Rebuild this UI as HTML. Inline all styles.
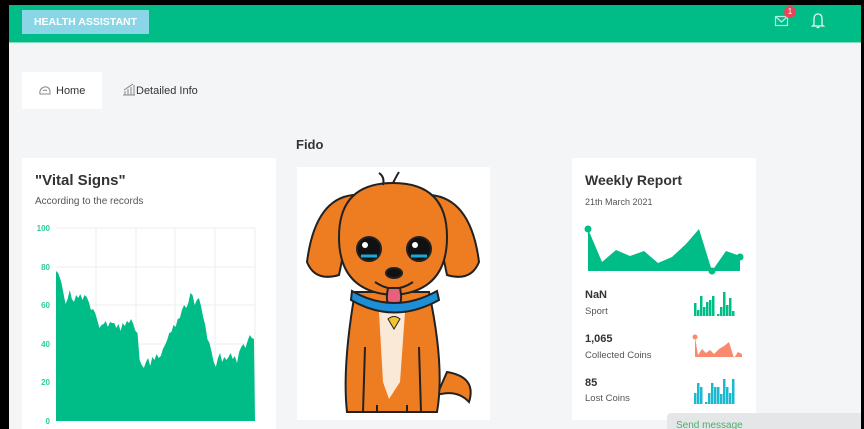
<!DOCTYPE html>
<html><head><meta charset="utf-8"><style>
*{margin:0;padding:0;box-sizing:border-box}
body{width:864px;height:429px;overflow:hidden;background:#000;font-family:"Liberation Sans",sans-serif;position:relative}
#page{position:absolute;left:9px;top:5px;width:852px;height:424px;background:#f4f5f7;overflow:hidden}
.hdr{position:absolute;left:0;top:0;width:852px;height:38px;background:#00bd87;border-bottom:1px solid #7fdcbf}
.brand{position:absolute;left:13px;top:5px;width:127px;height:24px;background:#8ad6e6;color:#fff;font-size:10.5px;font-weight:bold;line-height:24px;text-align:center}
.card{position:absolute;background:#fff}
.abs{position:absolute}
</style></head><body>
<div id="page">
<div class="hdr"><div class="brand">HEALTH ASSISTANT</div>
<svg class="abs" style="left:765px;top:9px" width="16" height="14"><rect x="1.5" y="2.5" width="12" height="9" fill="none" stroke="#b8ecdc" stroke-width="1.2"/><path d="M1.5 2.5 L7.5 8 L13.5 2.5" fill="none" stroke="#b8ecdc" stroke-width="1.2"/></svg>
<div class="abs" style="left:775px;top:1px;width:12px;height:12px;border-radius:6px;background:#e6455a;color:#fff;font-size:8px;text-align:center;line-height:12px">1</div>
<svg class="abs" style="left:802px;top:7px" width="14" height="18"><path d="M3 13 L3 7 Q3 2 7 2 Q11 2 11 7 L11 13 L12.5 14 L1.5 14 Z M5.5 15.5 L8.5 15.5" fill="none" stroke="#dff7ef" stroke-width="1.3"/></svg>
</div>
<div class="card" style="left:13px;top:67px;width:80px;height:37px"></div>
<svg class="abs" style="left:29px;top:79px" width="14" height="12"><path d="M2 10 Q1 5 6 3 Q11 2 12 7 L12 10 Z M5 7 Q7 5 9 7" fill="none" stroke="#888" stroke-width="1"/></svg>
<div class="abs" style="left:47px;top:80px;font-size:11px;color:#333">Home</div>
<svg class="abs" style="left:113px;top:78px" width="14" height="13"><path d="M1 12 L13 12 M3 12 L3 8 M6 12 L6 6 M9 12 L9 4 M12 12 L12 2 M2 7 L11 1" fill="none" stroke="#888" stroke-width="1"/></svg>
<div class="abs" style="left:127px;top:80px;font-size:11px;color:#333">Detailed Info</div>

<div class="card" style="left:13px;top:153px;width:254px;height:280px"></div>
<div class="abs" style="left:26px;top:167px;font-size:15px;font-weight:bold;color:#333">"Vital Signs"</div>
<div class="abs" style="left:26px;top:191px;font-size:10px;color:#555">According to the records</div>
<svg class="abs" style="left:13px;top:215px" width="254" height="215">
<g font-size="8" fill="#2ecf9b" font-weight="bold" text-anchor="end" font-family="Liberation Sans,sans-serif">
<text x="28" y="11">100</text><text x="28" y="50">80</text><text x="28" y="88">60</text><text x="28" y="127">40</text><text x="28" y="165">20</text><text x="28" y="204">0</text></g>
<g stroke="#eee" stroke-width="1"><path d="M34 8 H233 M34 47 H233 M34 85 H233 M34 124 H233 M34 162 H233 M74 8 V201 M114 8 V201 M153 8 V201 M193 8 V201 M233 8 V201"/></g>
<path fill="#00bd87" transform="translate(34,0) scale(1.0585,1) translate(-34,0)" d="M34 201 L34 51 L36 53 L39 62 L41 73 L43 84 L45 79 L47 70 L49 79 L51 82 L53 75 L55 78 L57 74 L59 80 L61 75 L63 77 L65 82 L67 90 L69 89 L71 93 L73 100 L75 108 L77 105 L79 104 L81 101 L83 107 L85 102 L87 103 L89 103 L91 108 L93 104 L95 111 L97 103 L99 106 L101 101 L103 103 L105 99 L107 104 L109 111 L111 113 L113 140 L115 145 L117 148 L119 142 L121 138 L123 146 L125 137 L127 140 L129 134 L131 138 L133 136 L135 129 L137 125 L139 120 L141 113 L143 112 L145 105 L147 107 L149 99 L151 98 L153 90 L155 85 L157 88 L159 83 L161 73 L163 75 L165 85 L167 80 L169 78 L171 86 L173 97 L175 105 L177 119 L179 123 L181 132 L183 142 L185 147 L187 138 L189 133 L191 142 L193 137 L195 140 L197 137 L199 133 L201 139 L203 136 L205 143 L207 132 L209 127 L211 124 L213 128 L215 121 L217 115 L219 118 L221 119 L222 201 Z"/>
</svg>

<div class="abs" style="left:287px;top:132px;font-size:13px;font-weight:bold;color:#333">Fido</div>
<div class="card" style="left:288px;top:162px;width:193px;height:253px"></div>
<svg class="abs" style="left:288px;top:162px" width="193" height="253">
<g stroke="#222" stroke-width="2">
<path d="M150 205 Q180 210 172 235 Q160 222 140 228 Z" fill="#ee7d22"/>
<path d="M58 125 Q45 200 50 245 L140 245 Q148 200 132 125 Z" fill="#ee7d22"/>
<path d="M82 145 L108 145 L103 215 L92 232 L86 215 Z" fill="#fbe9d8" stroke="none"/>
<path d="M68 180 L66 245 M122 180 L124 245 M80 238 L80 245 M110 238 L110 245" fill="none"/>
<path d="M56 28 Q18 32 10 95 Q18 115 42 108 Q52 60 56 28 Z" fill="#ee7d22"/>
<path d="M134 28 Q174 32 182 95 Q174 115 150 108 Q140 60 134 28 Z" fill="#ee7d22"/>
<path d="M96 16 Q150 16 150 70 Q150 125 96 128 Q42 125 42 70 Q42 16 96 16 Z" fill="#ee7d22"/>
<path d="M86 18 Q88 10 82 6 M96 16 Q100 8 102 5" fill="none"/>
<circle cx="72" cy="82" r="12" fill="#111"/><circle cx="122" cy="82" r="12" fill="#111"/>
<ellipse cx="97" cy="106" rx="8" ry="5" fill="#111"/>
<path d="M78 115 Q97 128 116 115" fill="none"/>
<path d="M91 121 Q87 140 97 140 Q107 140 103 121 Z" fill="#e8607a"/>
<path d="M55 124 Q97 148 140 124 L142 133 Q97 158 54 133 Z" fill="#1d8fd6"/>
<path d="M91 152 Q97 147 103 152 L97 162 Z" fill="#f2c431" stroke-width="1"/>
</g>
<circle cx="68" cy="78" r="3" fill="#fff"/><circle cx="118" cy="78" r="3" fill="#fff"/>
<path d="M64 89 H80 M114 89 H130" stroke="#1ba8d6" stroke-width="3"/>
</svg>

<div class="card" style="left:563px;top:153px;width:184px;height:262px"></div>
<div class="abs" style="left:576px;top:167px;font-size:14px;font-weight:bold;color:#333">Weekly Report</div>
<div class="abs" style="left:576px;top:192px;font-size:9px;color:#555">21th March 2021</div>
<svg class="abs" style="left:563px;top:153px" width="184" height="262">
<g transform="translate(0,-5)">
<path fill="#00bd87" d="M16 76 L30 109 L44 97 L58 103 L72 98 L86 110 L100 104 L114 91 L127 76 L140 118 L154 98 L168 103 L168 118 L16 118 Z"/>
<circle cx="16" cy="76" r="3.5" fill="#00bd87"/><circle cx="140" cy="118" r="3.5" fill="#00bd87"/><circle cx="168" cy="104" r="3.5" fill="#00bd87"/>
<g fill="#00bd87"><rect x="122" y="150" width="2.5" height="13"/><rect x="125" y="157" width="2.5" height="6"/><rect x="128" y="143" width="2.5" height="20"/><rect x="131" y="154" width="2.5" height="9"/><rect x="134" y="149" width="2.5" height="14"/><rect x="137" y="147" width="2.5" height="16"/><rect x="140" y="143" width="2.5" height="20"/><rect x="145" y="161" width="2.5" height="2"/><rect x="148" y="154" width="2.5" height="9"/><rect x="151" y="139" width="2.5" height="24"/><rect x="154" y="152" width="2.5" height="11"/><rect x="157" y="145" width="2.5" height="18"/><rect x="160" y="158" width="2.5" height="5"/></g>
<path fill="#fa8a6e" d="M123 184 L126 202 L130 196 L134 200 L138 197 L142 201 L147 196 L152 193 L157 189 L162 205 L166 199 L170 201 L170 204 L123 204 Z"/>
<circle cx="123" cy="184" r="2.5" fill="#fa8a6e"/>
<g fill="#1bb8d0"><rect x="122" y="240" width="2.5" height="11"/><rect x="125" y="230" width="2.5" height="21"/><rect x="128" y="234" width="2.5" height="17"/><rect x="133" y="249" width="2.5" height="2"/><rect x="136" y="240" width="2.5" height="11"/><rect x="139" y="230" width="2.5" height="21"/><rect x="142" y="234" width="2.5" height="17"/><rect x="145" y="234" width="2.5" height="17"/><rect x="148" y="241" width="2.5" height="10"/><rect x="151" y="226" width="2.5" height="25"/><rect x="154" y="234" width="2.5" height="17"/><rect x="157" y="240" width="2.5" height="11"/><rect x="160" y="226" width="2.5" height="25"/></g>
</g>
</svg>
<div class="abs" style="left:576px;top:284px;font-size:11px;font-weight:bold;color:#333">NaN</div>
<div class="abs" style="left:576px;top:301px;font-size:9.5px;color:#555">Sport</div>
<div class="abs" style="left:576px;top:328px;font-size:11px;font-weight:bold;color:#333">1,065</div>
<div class="abs" style="left:576px;top:345px;font-size:9.5px;color:#555">Collected Coins</div>
<div class="abs" style="left:576px;top:372px;font-size:11px;font-weight:bold;color:#333">85</div>
<div class="abs" style="left:576px;top:388px;font-size:9.5px;color:#555">Lost Coins</div>

<div class="abs" style="left:658px;top:408px;width:200px;height:30px;background:#e4e6e8;border-radius:4px 0 0 0"></div>
<div class="abs" style="left:667px;top:415px;font-size:10px;color:#4caf6a">Send message</div>
</div>
</body></html>
